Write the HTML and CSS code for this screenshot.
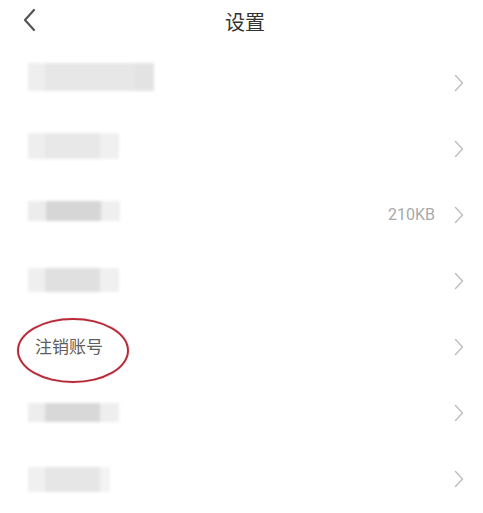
FILE: index.html
```html
<!DOCTYPE html>
<html lang="zh-CN">
<head>
<meta charset="utf-8">
<title>设置</title>
<link rel="stylesheet" href="styles.css">
</head>
<body>
<div class="page">
  <header class="header">
    <svg class="back" width="14" height="24" viewBox="0 0 14 24"><path d="M12 2 L3 12 L12 22" fill="none" stroke="#555" stroke-width="2.2" stroke-linecap="round" stroke-linejoin="round"/></svg>
    <h1 class="title">设置</h1>
  </header>
  <ul class="list">
    <li class="row">
      <div class="blur b1"><span class="s s-a"></span><span class="s s-b"></span><span class="s s-c"></span></div>
      <span class="arrow"><svg width="10" height="18" viewBox="0 0 10 18"><path d="M1.5 1.5 L8.5 9 L1.5 16.5" fill="none" stroke="#bdbdbd" stroke-width="1.4" stroke-linecap="round" stroke-linejoin="round"/></svg></span>
    </li>
    <li class="row">
      <div class="blur b2"><span class="s s-a"></span><span class="s s-b"></span><span class="s s-c"></span></div>
      <span class="arrow"><svg width="10" height="18" viewBox="0 0 10 18"><path d="M1.5 1.5 L8.5 9 L1.5 16.5" fill="none" stroke="#bdbdbd" stroke-width="1.4" stroke-linecap="round" stroke-linejoin="round"/></svg></span>
    </li>
    <li class="row">
      <div class="blur b3"><span class="s s-a"></span><span class="s s-b"></span><span class="s s-c"></span></div>
      <span class="value">210KB</span>
      <span class="arrow"><svg width="10" height="18" viewBox="0 0 10 18"><path d="M1.5 1.5 L8.5 9 L1.5 16.5" fill="none" stroke="#bdbdbd" stroke-width="1.4" stroke-linecap="round" stroke-linejoin="round"/></svg></span>
    </li>
    <li class="row">
      <div class="blur b4"><span class="s s-a"></span><span class="s s-b"></span><span class="s s-c"></span></div>
      <span class="arrow"><svg width="10" height="18" viewBox="0 0 10 18"><path d="M1.5 1.5 L8.5 9 L1.5 16.5" fill="none" stroke="#bdbdbd" stroke-width="1.4" stroke-linecap="round" stroke-linejoin="round"/></svg></span>
    </li>
    <li class="row row-mark">
      <span class="label">注销账号</span>
      <span class="ring"></span>
      <span class="arrow"><svg width="10" height="18" viewBox="0 0 10 18"><path d="M1.5 1.5 L8.5 9 L1.5 16.5" fill="none" stroke="#bdbdbd" stroke-width="1.4" stroke-linecap="round" stroke-linejoin="round"/></svg></span>
    </li>
    <li class="row">
      <div class="blur b6"><span class="s s-a"></span><span class="s s-b"></span><span class="s s-c"></span></div>
      <span class="arrow"><svg width="10" height="18" viewBox="0 0 10 18"><path d="M1.5 1.5 L8.5 9 L1.5 16.5" fill="none" stroke="#bdbdbd" stroke-width="1.4" stroke-linecap="round" stroke-linejoin="round"/></svg></span>
    </li>
    <li class="row">
      <div class="blur b7"><span class="s s-a"></span><span class="s s-b"></span><span class="s s-c"></span></div>
      <span class="arrow"><svg width="10" height="18" viewBox="0 0 10 18"><path d="M1.5 1.5 L8.5 9 L1.5 16.5" fill="none" stroke="#bdbdbd" stroke-width="1.4" stroke-linecap="round" stroke-linejoin="round"/></svg></span>
    </li>
  </ul>
</div>
</body>
</html>
```
FILE: styles.css
```css
* { box-sizing: border-box; }
html, body { margin: 0; padding: 0; background: #fff; }
body {
  font-family: "Noto Sans CJK SC", "Noto Sans", sans-serif;
  color: #333;
  width: 483px;
  height: 513px;
  overflow: hidden;
}
.page { display: flex; flex-direction: column; }
.header {
  position: relative;
  height: 46px;
  display: flex;
  align-items: center;
  justify-content: center;
}
.back {
  position: absolute;
  left: 22px;
  top: 8px;
}
.title {
  margin: 0;
  font-size: 20px;
  font-weight: 400;
  color: #333;
  padding-left: 7px;
  padding-bottom: 2px;
  line-height: 1;
}
.list { list-style: none; margin: 0; padding: 0; }
.row {
  position: relative;
  height: 66px;
  display: flex;
  align-items: center;
  padding: 0 19px 0 28px;
}
.row:first-child { margin-top: 2px; }
.arrow { margin-left: auto; display: flex; padding-top: 4px; }
.value + .arrow { margin-left: 19px; }
.value {
  margin-left: auto;
  font-family: "Roboto", "Noto Sans", sans-serif;
  font-size: 16px;
  color: #a9a9a9;
  padding-top: 2px;
}
.label {
  font-size: 17px;
  color: #5e5e5e;
  padding-left: 7px;
}
.ring {
  position: absolute;
  left: 17px;
  top: 6px;
  width: 112px;
  height: 65px;
  border: 2.6px solid #b82a38;
  border-radius: 50%;
  box-shadow: 0 0 1px rgba(184, 42, 56, 0.5);
}
.blur {
  display: flex;
  filter: blur(1.4px);
  background: #f0f0f0;
}
.s { display: block; height: 100%; }
.b1 { width: 126px; height: 28px; margin-top: -8px; }
.b1 .s-a { width: 17px; background: #eeeeee; }
.b1 .s-b { width: 90px; background: #e7e7e7; }
.b1 .s-c { width: 19px; background: #e3e3e3; }
.b2 { width: 91px; height: 26px; margin-top: -2px; background: #f1f1f1; }
.b2 .s-a { width: 17px; background: #eeeeee; }
.b2 .s-b { width: 55px; background: #e8e8e8; }
.b2 .s-c { width: 19px; background: #f0f0f0; }
.b3 { width: 92px; height: 20px; margin-top: -4px; }
.b3 .s-a { width: 18px; background: #ececec; }
.b3 .s-b { width: 55px; background: #d6d6d6; }
.b3 .s-c { width: 19px; background: #efefef; }
.b4 { width: 91px; height: 24px; margin-top: 2px; }
.b4 .s-a { width: 17px; background: #efefef; }
.b4 .s-b { width: 55px; background: #e0e0e0; }
.b4 .s-c { width: 19px; background: #f0f0f0; }
.b6 { width: 91px; height: 19px; margin-top: 2px; }
.b6 .s-a { width: 17px; background: #ededed; }
.b6 .s-b { width: 55px; background: #d8d8d8; }
.b6 .s-c { width: 19px; background: #eeeeee; }
.b7 { width: 82px; height: 25px; margin-top: 4px; }
.b7 .s-a { width: 17px; background: #f0f0f0; }
.b7 .s-b { width: 55px; background: #e6e6e6; }
.b7 .s-c { width: 10px; background: #f3f3f3; }
```
